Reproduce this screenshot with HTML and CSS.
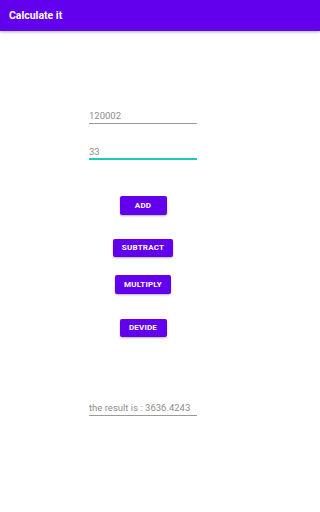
FILE: index.html
```html
<!DOCTYPE html>
<html>
<head>
<meta charset="utf-8">
<link rel="stylesheet" href="styles.css">
</head>
<body>
<header class="appbar"><span class="title">Calculate it</span></header>
<main class="content">
  <div class="field field-first">120002</div>
  <div class="field field-focused">33</div>
  <button class="btn btn-add">ADD</button>
  <button class="btn btn-sub">SUBTRACT</button>
  <button class="btn btn-mul">MULTIPLY</button>
  <button class="btn btn-div">DEVIDE</button>
  <div class="field field-result">the result is : 3636.4243</div>
</main>
</body>
</html>
```
FILE: styles.css
```css
html, body {
  margin: 0;
  padding: 0;
  background: #ffffff;
  font-family: Roboto, "Liberation Sans", sans-serif;
}
.appbar {
  height: 31px;
  background: #6200ee;
  display: flex;
  align-items: center;
  padding-left: 9px;
  box-shadow: 0 1px 3px rgba(0, 0, 0, 0.3);
}
.title {
  color: #ffffff;
  font-size: 10.5px;
  font-weight: 700;
}
.content {
  width: 286px;
  display: flex;
  flex-direction: column;
  align-items: center;
}
.field {
  width: 108px;
  box-sizing: border-box;
  font-size: 9.5px;
  line-height: 12px;
  color: #8e8e8e;
  padding-bottom: 1px;
  border-bottom: 1px solid #9a9a9a;
}
.field-first {
  margin-top: 79px;
}
.field-focused {
  margin-top: 22px;
  padding-bottom: 0;
  border-bottom: 2px solid #1ccab6;
}
.field-result {
  margin-top: 65px;
}
.btn {
  height: 18.5px;
  min-width: 47px;
  padding: 0 9px;
  border: none;
  border-radius: 2px;
  background: #6200ee;
  color: #ffffff;
  font-family: Roboto, "Liberation Sans", sans-serif;
  font-size: 8px;
  font-weight: 700;
  letter-spacing: 0.2px;
  box-shadow: 0 1px 2px rgba(0, 0, 0, 0.3);
}
.btn-add { margin-top: 36px; }
.btn-sub { margin-top: 24px; }
.btn-mul { margin-top: 18px; }
.btn-div { margin-top: 25px; }
```
